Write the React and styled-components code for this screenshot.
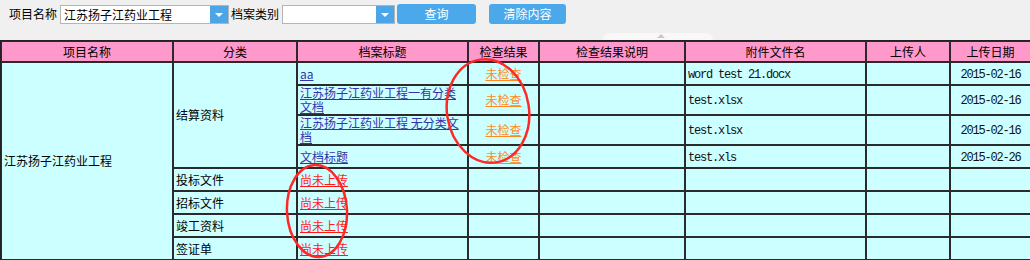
import React from 'react';
import styled, { createGlobalStyle } from 'styled-components';

const GlobalStyle = createGlobalStyle`
  body {
    margin: 0;
    background: #f0f0f0;
    font-family: "Noto Sans CJK SC", "Microsoft YaHei", sans-serif;
    font-size: 12px;
    color: #000;
  }
`;

const StyledPage = styled.div`
  position: relative;
  width: 1030px;
  height: 260px;
  overflow: hidden;
`;

const StyledToolbar = styled.div`
  display: flex;
  align-items: center;
  height: 28px;
  padding-left: 9px;
`;

const StyledLabel = styled.span`
  margin-right: 3px;
  line-height: 16px;
  white-space: nowrap;
`;

const StyledSelect = styled.div`
  display: flex;
  width: ${(p) => p.$width}px;
  height: 19px;
  margin-right: 2px;
  margin-top: 1px;
  background: #fff;
  border: 1px solid #b5b5b5;
  box-sizing: border-box;
`;

const StyledSelectText = styled.div`
  flex: 1;
  padding-left: 3px;
  line-height: 17px;
  white-space: nowrap;
  overflow: hidden;
`;

const StyledArrow = styled.div`
  display: flex;
  align-items: center;
  justify-content: center;
  width: 18px;
  background: #4ba5e7;

  &::after {
    content: '';
    border-left: 4px solid transparent;
    border-right: 4px solid transparent;
    border-top: 4px solid #fff;
  }
`;

const StyledButton = styled.button`
  width: ${(p) => p.$width}px;
  height: 20px;
  margin-left: ${(p) => p.$gap}px;
  padding: 0;
  border: none;
  border-radius: 3px;
  background: #4aa8eb;
  color: #fff;
  font-family: inherit;
  font-size: 12px;
  line-height: 20px;
`;

const StyledCollapseBar = styled.div`
  display: flex;
  align-items: flex-end;
  height: 12px;
  padding-left: 603px;
`;

const StyledCollapseTab = styled.div`
  position: relative;
  width: 110px;
  height: 7px;
  background: #f8f8f8;
  border-radius: 10px 10px 0 0;

  &::after {
    content: '';
    position: absolute;
    left: 54px;
    top: 1px;
    border-left: 4px solid transparent;
    border-right: 4px solid transparent;
    border-bottom: 4px solid #c8c8c8;
  }
`;

const StyledTable = styled.table`
  width: 1030px;
  table-layout: fixed;
  border-collapse: separate;
  border-spacing: 0;
  border: 1px solid #222;
`;

const StyledCol = styled.col`
  width: ${(p) => p.$w}px;
`;

const StyledTh = styled.th`
  height: 19px;
  padding: 0;
  background: #ff99cc;
  border: 1px solid #2a2a2a;
  font-weight: normal;
  line-height: 19px;
  text-align: center;
`;

const StyledTd = styled.td`
  height: 21px;
  padding: 0 2px;
  background: #ccffff;
  border: 1px solid #2a2a2a;
  line-height: 14px;
  vertical-align: middle;
  text-align: ${(p) => p.$align || 'left'};
`;

const StyledMono = styled.span`
  font-family: "Liberation Mono", "DejaVu Sans Mono", monospace;
  font-size: 12px;
  letter-spacing: -1.2px;
  color: #111;
`;

const StyledLink = styled.a`
  color: ${(p) => p.$color};
  text-decoration: underline;
  cursor: pointer;
`;

const StyledMarks = styled.svg`
  position: absolute;
  left: 0;
  top: 0;
  pointer-events: none;
`;

const columns = [172, 124, 171, 71, 146, 181, 84, 81];
const headers = ['项目名称', '分类', '档案标题', '检查结果', '检查结果说明', '附件文件名', '上传人', '上传日期'];

const files = [
  { title: 'aa', file: 'word test 21.docx', date: '2015-02-16' },
  { title: '江苏扬子江药业工程一有分类文档', file: 'test.xlsx', date: '2015-02-16' },
  { title: '江苏扬子江药业工程 无分类文档', file: 'test.xlsx', date: '2015-02-16' },
  { title: '文档标题', file: 'test.xls', date: '2015-02-26' },
];

const missing = ['投标文件', '招标文件', '竣工资料', '签证单'];

const BLUE = '#3333aa';
const ORANGE = '#ff8a1c';
const RED = '#ff1a1a';

const App = () => {
  return (
    <StyledPage>
      <GlobalStyle />
      <StyledToolbar>
        <StyledLabel>项目名称</StyledLabel>
        <StyledSelect $width={169}>
          <StyledSelectText>江苏扬子江药业工程</StyledSelectText>
          <StyledArrow />
        </StyledSelect>
        <StyledLabel>档案类别</StyledLabel>
        <StyledSelect $width={113}>
          <StyledSelectText />
          <StyledArrow />
        </StyledSelect>
        <StyledButton $width={79} $gap={0}>查询</StyledButton>
        <StyledButton $width={77} $gap={13}>清除内容</StyledButton>
      </StyledToolbar>
      <StyledCollapseBar>
        <StyledCollapseTab />
      </StyledCollapseBar>
      <StyledTable>
        <colgroup>
          {columns.map((w, i) => (
            <StyledCol key={i} $w={w} />
          ))}
        </colgroup>
        <thead>
          <tr>
            {headers.map((h) => (
              <StyledTh key={h}>{h}</StyledTh>
            ))}
          </tr>
        </thead>
        <tbody>
          {files.map((f, i) => (
            <tr key={i}>
              {i === 0 && <StyledTd rowSpan={8}>江苏扬子江药业工程</StyledTd>}
              {i === 0 && <StyledTd rowSpan={4}>结算资料</StyledTd>}
              <StyledTd>
                <StyledLink $color={BLUE}>{f.title}</StyledLink>
              </StyledTd>
              <StyledTd $align="center">
                <StyledLink $color={ORANGE}>未检查</StyledLink>
              </StyledTd>
              <StyledTd />
              <StyledTd>
                <StyledMono>{f.file}</StyledMono>
              </StyledTd>
              <StyledTd />
              <StyledTd $align="center">
                <StyledMono>{f.date}</StyledMono>
              </StyledTd>
            </tr>
          ))}
          {missing.map((m) => (
            <tr key={m}>
              <StyledTd>{m}</StyledTd>
              <StyledTd>
                <StyledLink $color={RED}>尚未上传</StyledLink>
              </StyledTd>
              <StyledTd />
              <StyledTd />
              <StyledTd />
              <StyledTd />
              <StyledTd />
            </tr>
          ))}
        </tbody>
      </StyledTable>
      <StyledMarks width="1030" height="260">
        <ellipse cx="488" cy="111" rx="41" ry="52" transform="rotate(-9 488 111)" fill="none" stroke="#ff2828" strokeWidth="2.5" />
        <ellipse cx="317" cy="211" rx="30" ry="46" transform="rotate(-3 317 211)" fill="none" stroke="#ff2828" strokeWidth="2.5" />
      </StyledMarks>
    </StyledPage>
  );
};

export default App;
